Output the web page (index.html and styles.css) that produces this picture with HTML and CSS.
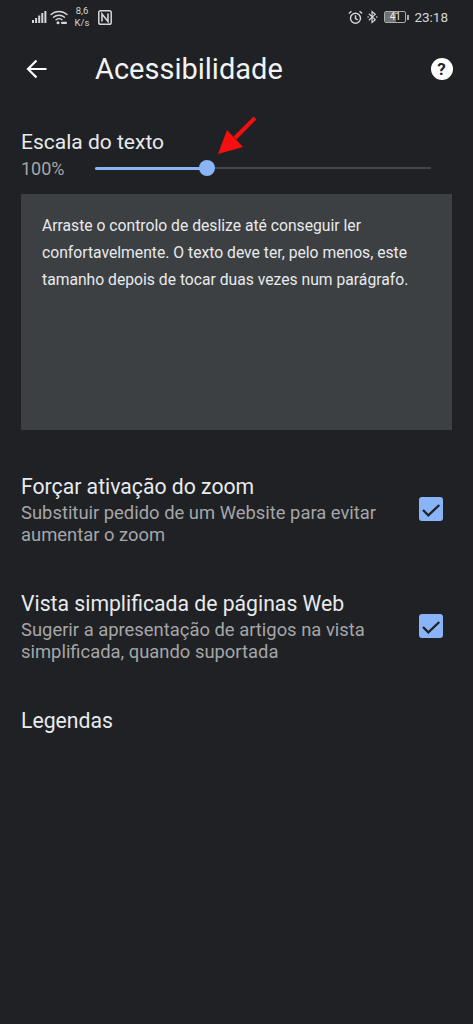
FILE: index.html
```html
<!DOCTYPE html>
<html lang="pt">
<head>
<meta charset="utf-8">
<title>Acessibilidade</title>
<link rel="stylesheet" href="styles.css">
</head>
<body>
<div class="phone">
  <header class="status">
    <div class="status-group left">
      <svg class="ic-signal" viewBox="0 0 15 14" width="15" height="14"><g fill="#d6d7d8"><rect x="0" y="10" width="2" height="3"/><rect x="3.100" y="8" width="2" height="5"/><rect x="6.200" y="5.500" width="2" height="7.500"/><rect x="9.300" y="3" width="2" height="10"/><rect x="12.400" y="1" width="2" height="12"/></g></svg>
      <svg class="ic-wifi" viewBox="0 0 18 15" width="18" height="15"><g fill="none" stroke="#d6d7d8" stroke-width="1.400" stroke-linecap="round"><path d="M1 4.600C5.500 .4 12.500 .4 17 4.600"/><path d="M3.500 7.200C6.500 4.500 11.500 4.500 14.500 7.200"/><path d="M6 9.700C7.700 8.500 10.300 8.500 12 9.700"/></g><circle cx="8" cy="12.800" r="1.500" fill="#d6d7d8"/><rect x="11" y="11.800" width="6" height="2.200" rx="1.100" fill="#d6d7d8"/></svg>
      <div class="speed"><span>8,6</span><span>K/s</span></div>
      <svg class="ic-nfc" viewBox="0 0 14 15" width="14" height="15"><rect x="0.800" y="0.800" width="12.400" height="13.400" rx="1.800" fill="none" stroke="#d6d7d8" stroke-width="1.500"/><path d="M4 11.500V4l6 7.500V3.500" fill="none" stroke="#d6d7d8" stroke-width="1.600"/></svg>
    </div>
    <div class="status-group right">
      <svg class="ic-alarm" viewBox="0 0 15 15" width="15" height="15"><g fill="none" stroke="#d6d7d8" stroke-width="1.400"><circle cx="7.500" cy="8.300" r="5"/><path d="M7.500 5.200v3.300l2.200 1.300"/><path d="M.9 3.600 3.400 1.300M14.100 3.600 11.600 1.300"/></g></svg>
      <svg class="ic-bt" viewBox="0 0 12 15" width="11" height="14"><path d="M2 4l7 6.400-3.500 3V1.600l3.500 3L2 11" fill="none" stroke="#d6d7d8" stroke-width="1.300"/><g fill="#d6d7d8"><circle cx="1.200" cy="7.500" r=".9"/><circle cx="10.600" cy="7.500" r=".9"/></g></svg>
      <div class="battery"><div class="battery-body"><span class="battery-fill"></span><span class="battery-num">41</span></div><span class="battery-tip"></span></div>
      <span class="clock">23:18</span>
    </div>
  </header>

  <nav class="toolbar">
    <svg class="ic-back" viewBox="0 0 24 24" width="24" height="24"><path d="M21.500 12H3.500M11.500 3.500 3 12l8.500 8.500" fill="none" stroke="#fff" stroke-width="2.200"/></svg>
    <h1 class="title">Acessibilidade</h1>
    <div class="help">?</div>
  </nav>

  <section class="scale">
    <div class="scale-label">Escala do texto</div>
    <div class="scale-row">
      <span class="scale-value">100%</span>
      <div class="slider">
        <div class="slider-on"></div>
        <div class="slider-thumb"></div>
        <svg class="red-arrow" viewBox="0 0 40 40" width="40" height="40"><path d="M38 2 L18 22" stroke="#f50f0f" stroke-width="4" fill="none"/><path d="M1 38 L10 14 L26 31Z" fill="#f50f0f"/></svg>
      </div>
    </div>
  </section>

  <div class="preview">
    <p>Arraste o controlo de deslize até conseguir ler confortavelmente. O texto deve ter, pelo menos, este tamanho depois de tocar duas vezes num parágrafo.</p>
  </div>

  <section class="option first">
    <div class="option-text">
      <div class="option-title">Forçar ativação do zoom</div>
      <div class="option-sub">Substituir pedido de um Website para evitar aumentar o zoom</div>
    </div>
    <div class="check"><svg viewBox="0 0 24 24" width="24" height="24"><path d="M4 13l5.300 5.300L20.300 8" fill="none" stroke="#202225" stroke-width="2.300"/></svg></div>
  </section>

  <section class="option second">
    <div class="option-text">
      <div class="option-title">Vista simplificada de páginas Web</div>
      <div class="option-sub">Sugerir a apresentação de artigos na vista simplificada, quando suportada</div>
    </div>
    <div class="check"><svg viewBox="0 0 24 24" width="24" height="24"><path d="M4 13l5.300 5.300L20.300 8" fill="none" stroke="#202225" stroke-width="2.300"/></svg></div>
  </section>

  <div class="captions">Legendas</div>
</div>
</body>
</html>
```

FILE: styles.css
```css
* { box-sizing: border-box; }
html, body { margin: 0; padding: 0; }
body { background: #1f2124; font-family: Roboto, "Noto Sans", sans-serif; color: #e8eaed; }
.phone { width: 473px; height: 1024px; overflow: hidden; background: #1f2124; }

.status { height: 32px; display: flex; justify-content: space-between; align-items: center; padding: 2px 25px 0 32px; color: #d6d7d8; }
.status-group { display: flex; align-items: center; }
.left { gap: 3px; }
.right { gap: 4px; }
.speed { display: flex; flex-direction: column; font-size: 9.500px; line-height: 12px; align-items: center; margin: 0 5px 0 3px; width: 16px; }
.battery { display: flex; align-items: center; margin-left: 2px; }
.battery-body { position: relative; width: 22px; height: 12px; border: 1px solid #a9abad; border-radius: 2px; overflow: hidden; }
.battery-fill { position: absolute; left: 0; top: 0; bottom: 0; width: 11px; background: #6f7173; }
.battery-num { position: absolute; inset: 0; text-align: center; font-size: 10px; line-height: 10px; color: #e8eaed; }
.battery-tip { width: 2px; height: 5px; background: #a9abad; margin-left: 1px; }
.clock { font-size: 13.500px; margin-left: 1px; }

.toolbar { height: 74px; display: flex; align-items: center; padding: 0 20.500px 0 25px; }
.title { flex: 1; margin: 0 0 0 46px; font-size: 29px; font-weight: 400; color: #f1f3f4; }
.help { width: 22px; height: 22px; border-radius: 50%; background: #fff; color: #202225; font-size: 17px; font-weight: 700; line-height: 22px; text-align: center; }

.scale { padding: 0 21px; height: 68px; margin-top: 20px; }
.scale-label { font-size: 21px; line-height: 32px; color: #e8eaed; }
.scale-row { display: flex; align-items: center; height: 20px; }
.scale-value { width: 74px; font-size: 18px; color: #a5a6a8; }
.slider { position: relative; width: 336px; height: 2px; background: #44474a; border-radius: 1px; }
.slider-on { width: 112px; height: 3px; margin-top: -.5px; background: #8ab4f8; border-radius: 2px; }
.slider-thumb { position: absolute; left: 104px; top: -7px; width: 16px; height: 16px; border-radius: 50%; background: #8ab4f8; }
.red-arrow { position: absolute; left: 122px; top: -51px; }

.preview { margin: 0 21px; height: 236px; background: #3c4043; padding: 18px 21px; }
.preview p { margin: 0; font-size: 15.700px; line-height: 27px; color: #e8eaed; }

.option { display: flex; align-items: flex-start; justify-content: space-between; padding: 0 30px 0 21px; margin-top: 44px; }
.first { margin-top: 43px; }
.option-text { width: 372px; }
.option-title { font-size: 21.200px; line-height: 28px; color: #e8eaed; }
.option-sub { margin-top: 1px; font-size: 18.400px; line-height: 22px; color: #a5a6a8; }
.check { width: 24px; height: 24px; margin-top: 24px; background: #8ab4f8; border-radius: 3px; }

.captions { margin: 44px 21px 0; font-size: 21.200px; line-height: 28px; color: #e8eaed; }
```
